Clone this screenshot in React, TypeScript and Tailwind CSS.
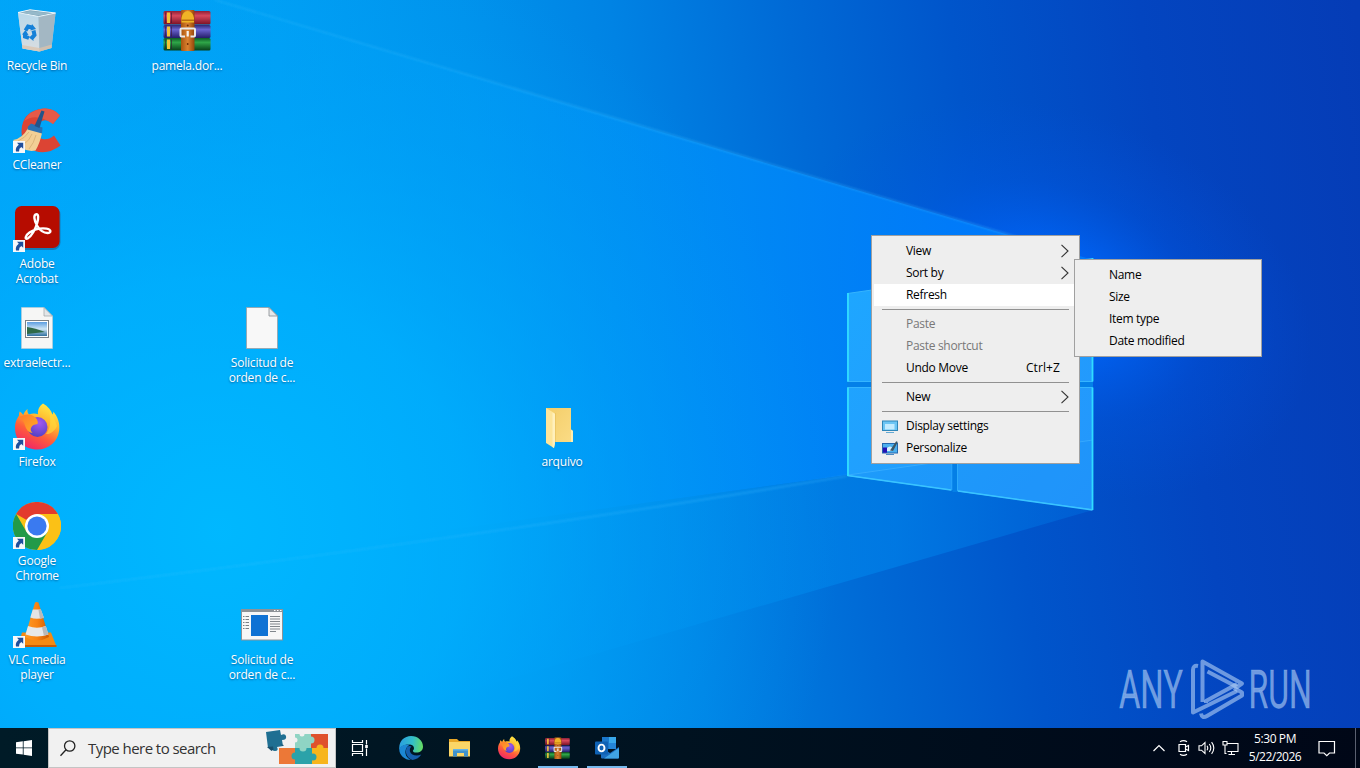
import React from 'react';
import clsx from 'clsx';

interface DesktopItem {
  id: number;
  label: string[];
  icon: React.FC;
  cell: string;
  shortcut?: boolean;
}

interface MenuEntry {
  label?: string;
  hint?: string;
  icon?: React.FC;
  arrow?: boolean;
  disabled?: boolean;
  active?: boolean;
}

/* ---------- Shared gradients ---------- */

const SharedDefs = () => (
  <svg className="absolute h-0 w-0" aria-hidden="true">
    <defs>
      <linearGradient id="ffBody" x1="0.8" y1="0" x2="0.3" y2="1">
        <stop offset="0" stopColor="#fff14a" />
        <stop offset="0.35" stopColor="#ffb92e" />
        <stop offset="0.65" stopColor="#ff5e3a" />
        <stop offset="1" stopColor="#f02468" />
      </linearGradient>
      <radialGradient id="ffGlobe" cx="0.6" cy="0.3" r="0.8">
        <stop offset="0" stopColor="#a258f0" />
        <stop offset="1" stopColor="#4a3fbf" />
      </radialGradient>
      <linearGradient id="ffHead" x1="0" y1="0" x2="1" y2="1">
        <stop offset="0" stopColor="#ff7a2c" />
        <stop offset="1" stopColor="#ffae24" />
      </linearGradient>
      <linearGradient id="rarRed" x1="0" y1="0" x2="0" y2="1">
        <stop offset="0" stopColor="#8c2036" />
        <stop offset="0.35" stopColor="#d8485c" />
        <stop offset="1" stopColor="#7a1226" />
      </linearGradient>
      <linearGradient id="rarBlue" x1="0" y1="0" x2="0" y2="1">
        <stop offset="0" stopColor="#2c2a78" />
        <stop offset="0.35" stopColor="#6a63d0" />
        <stop offset="1" stopColor="#241d68" />
      </linearGradient>
      <linearGradient id="rarGreen" x1="0" y1="0" x2="0" y2="1">
        <stop offset="0" stopColor="#0c5c26" />
        <stop offset="0.35" stopColor="#2fa648" />
        <stop offset="1" stopColor="#07401a" />
      </linearGradient>
      <linearGradient id="rarBelt" x1="0" y1="0" x2="1" y2="0">
        <stop offset="0" stopColor="#a8540f" />
        <stop offset="0.5" stopColor="#dc8230" />
        <stop offset="1" stopColor="#93450a" />
      </linearGradient>
      <linearGradient id="vlcCone" x1="0" y1="0" x2="1" y2="0">
        <stop offset="0" stopColor="#ff9a24" />
        <stop offset="0.5" stopColor="#f98312" />
        <stop offset="1" stopColor="#cf5a00" />
      </linearGradient>
      <linearGradient id="folderBack" x1="0" y1="0" x2="1" y2="1">
        <stop offset="0" stopColor="#f3cd68" />
        <stop offset="1" stopColor="#fbdc86" />
      </linearGradient>
      <linearGradient id="binLeft" x1="0" y1="0" x2="0" y2="1">
        <stop offset="0" stopColor="#b9d8ea" />
        <stop offset="1" stopColor="#d9dde0" />
      </linearGradient>
      <linearGradient id="edgeTop" x1="0" y1="0.4" x2="1" y2="0.5">
        <stop offset="0" stopColor="#2a9ee0" />
        <stop offset="0.55" stopColor="#33bfc9" />
        <stop offset="1" stopColor="#66dd62" />
      </linearGradient>
      <linearGradient id="sky" x1="0" y1="0" x2="0" y2="1">
        <stop offset="0" stopColor="#5c9de0" />
        <stop offset="0.5" stopColor="#cfe6f5" />
        <stop offset="1" stopColor="#2f6f9e" />
      </linearGradient>
    </defs>
  </svg>
);

/* ---------- Desktop icons, drawn on a 48px box ---------- */

const RecycleBinIcon = () => (
  <svg width="48" height="48" viewBox="0 0 48 48">
    <path d="M5 5.5 17 2.8 42.5 6 38.5 41 26.5 44.5 9.5 41.5Z" fill="#a9cfe4" />
    <path d="M5 5.5 25.5 9.5 26.5 44.5 9.5 41.5Z" fill="url(#binLeft)" />
    <path d="M25.5 9.5 42.5 6 38.5 41 26.5 44.5Z" fill="#a3b7c3" />
    <path d="M5 5.5 17 2.8 42.5 6 25.5 9.5Z" fill="#7fa3b6" stroke="#e9f5fb" strokeWidth="1" />
    <path d="M8 5.8 17 4 39 6.3 25.5 8.6Z" fill="#96b9ca" />
    <path d="M9 38 26.3 41 26.5 44.5 9.5 41.5ZM26.3 41 38.8 37.5 38.5 41 26.5 44.5Z" fill="#dcc3ab" opacity="0.75" />
    <g fill="none" stroke="#1581d8" strokeWidth="4">
      <path d="M12.5 23.5 15 19.5 19 20.5" />
      <path d="M20.5 23.5 21.5 28 19 31" />
      <path d="M16 31 12 29.5 12 26" />
    </g>
    <path d="M19 17 23 22 17.5 23.5ZM20 27.5 20.5 34 16 30.5ZM9 27.5 12.5 23 15.5 28Z" fill="#1581d8" />
  </svg>
);

const WinrarIcon = ({ size = 48 }: { size?: number }) => (
  <svg width={size} height={size} viewBox="0 0 48 48">
    <rect x="0.5" y="4" width="47" height="13.5" rx="1.5" fill="url(#rarRed)" />
    <rect x="0.5" y="18" width="47" height="13" rx="1.5" fill="url(#rarBlue)" />
    <rect x="0.5" y="31" width="47" height="12.5" rx="1.5" fill="url(#rarGreen)" />
    <path d="M4 5.5h3v10.5h-3zM4 19.5h3v10h-3zM4 32.5h3v9.5h-3z" fill="#f2c438" />
    <path d="M2 5.5h1v10.5h-1zM8 5.5h1v10.5h-1zM2 19.5h1v10h-1zM8 19.5h1v10h-1zM2 32.5h1v9.5h-1zM8 32.5h1v9.5h-1z" fill="#3a1030" opacity="0.6" />
    <rect x="18" y="3" width="13.5" height="41" rx="1" fill="url(#rarBelt)" />
    <path d="M18.5 11a6.3 8 0 0 1 12.5 0v4.5h-12.5z" fill="#f0b326" />
    <path d="M18.5 12.5h12.5v1.500h-12.500z" fill="#b96f10" />
    <circle cx="24.7" cy="18.5" r="1" fill="#6e2c04" />
    <path d="M22 29.500h-3.500q-1 0-1-1v-6q0-1 1-1h12.500q1 0 1 1v6q0 1-1 1H27.500" fill="none" stroke="#e9e9ea" strokeWidth="2" />
    <path d="M24.700 24v5.500" stroke="#f4f4f4" strokeWidth="2.200" />
    <circle cx="24.700" cy="37" r="0.900" fill="#6e2c04" />
  </svg>
);

const CCleanerIcon = () => (
  <svg width="48" height="48" viewBox="0 0 48 48">
    <path d="M47 9.5Q40 1.5 29 2.8 12 5 9 20 6 39 22 45q13 4 25.5-5.5L41 29.5q-6 5-11.5 3.5-7.5-2-7-9.5.8-8 8-9 6.5-.8 9.5 3.5Z" fill="#dc4434" />
    <path d="M47 9.5Q40 1.5 29 2.8 16 4.5 11 15q12-9 29 3Z" fill="#e65a48" />
    <path d="M0 34q9-1 15.5-12.5L29 27q-2 10-6.5 17.5Q10 47 0 34Z" fill="#f2cf95" />
    <path d="M5 35q7-3 11-9M10 39q7-5 9-11M16 43q5-6 7-14" stroke="#d9b176" strokeWidth="0.9" fill="none" />
    <path d="M15 20.5 18 17.5 29.5 21.5 29 27.5 14.5 23.5Z" fill="#2a72b4" />
    <path d="M21.5 20 28.5 4.5 31.5 5.5 26.5 22Z" fill="#24548a" />
  </svg>
);

const AcrobatIcon = () => (
  <svg width="48" height="48" viewBox="0 0 48 48">
    <rect x="2.5" y="2" width="45" height="43" rx="7.5" fill="#3a2c40" opacity="0.35" />
    <rect x="2" y="1" width="44.5" height="42" rx="6.5" fill="#b60c00" />
    <path
      d="M23.5 9.3c-3.4 0-2.3 6.5.5 11.2 2.5 4.2 6.5 7.5 10.5 7.5 4.2 0 3.8-3.8-1-4.4-5.5-.7-12.5.9-17 3.9-4.500 3-5 7.500-1.800 6 3.800-2 7.800-9.500 9.500-15.500 1.400-5 1.300-8.700-.700-8.700Z"
      fill="none"
      stroke="#fff"
      strokeWidth="2.4"
      strokeLinejoin="round"
    />
  </svg>
);

const PageIcon = () => (
  <svg width="48" height="48" viewBox="0 0 48 48">
    <path d="M8.5 3.5H31L39.5 12V44.5H8.5Z" fill="#f8f8f8" stroke="#9a9fa4" strokeWidth="0.8" />
    <path d="M31 3.5V12h8.5Z" fill="#e6e8ea" stroke="#858a90" strokeWidth="0.8" />
  </svg>
);

const PictureFileIcon = () => (
  <svg width="48" height="48" viewBox="0 0 48 48">
    <path d="M8.5 3.5H31L39.5 12V44.5H8.5Z" fill="#f6f6f5" stroke="#c6ccd0" strokeWidth="0.6" />
    <path d="M31 3.5V12h8.5Z" fill="#e3e6e8" stroke="#9ba0a5" strokeWidth="0.7" />
    <rect x="12.5" y="16.5" width="23" height="17" fill="#fff" stroke="#7b7f84" />
    <rect x="14" y="18" width="20" height="14" fill="url(#sky)" />
    <path d="M14 23q8 1 18 5l-18 2Z" fill="#2f6a48" />
  </svg>
);

const FirefoxIcon = ({ size = 48 }: { size?: number }) => (
  <svg width={size} height={size} viewBox="0 0 48 48">
    <path
      d="M30 0.5c5 3 8 6.5 9.5 11 .8-1 .8-2 .7-3 4.5 5 6.8 11.5 6 18.5C45 38.5 36 46.5 24.5 46.5 11.5 46.5 2 37.5 2 25c0-6 2-9.5 4-12.5 0-2 .2-3 .7-4 1.5 1 2.5 2 3.5 3.5C11.5 9 12.5 7.5 14.5 6c-.3 2 0 4 1.5 5.5 3.5-1.5 6.5-1.2 9-.3C24.5 6.5 26.5 3 30 .5Z"
      fill="url(#ffBody)"
    />
    <circle cx="24.5" cy="24" r="10" fill="url(#ffGlobe)" />
    <path d="M6 14q5-3 10-2.5 5 .5 8 5 1.500 3 .500 4.500-5 .500-6 3-2 3 1 6-6-1-7.500-7.500Q10 16 6 14Z" fill="url(#ffHead)" />
    <path d="M30 1c4 3 6.5 8 7 13 1 8-1 13-4 17 4 .5 9-3 11-8-1.5-4-3-8-5-11.5C37.5 7 35 4 30 1Z" fill="#ffda3c" opacity="0.65" />
  </svg>
);

const ChromeIcon = () => (
  <svg width="48" height="48" viewBox="0 0 48 48">
    <circle cx="24" cy="24" r="24" fill="#fbc116" />
    <path d="M24 24 3.2 12A24 24 0 0 1 44.8 12Z" fill="#e33b2e" />
    <path d="M24 12H44.8A24 24 0 0 1 24 48L34.4 30Z" fill="#fbc116" />
    <path d="M3.2 12A24 24 0 0 0 24 48L34.4 30 13.6 30Z" fill="#229a49" />
    <circle cx="24" cy="24" r="12" fill="#fff" />
    <circle cx="24" cy="24" r="9.6" fill="#3a7af0" />
  </svg>
);

const VlcIcon = () => (
  <svg width="48" height="48" viewBox="0 0 48 48">
    <path d="M9 31.5h29l5.5 14H5Z" fill="#f48a14" />
    <path d="M5 44h38.5v2H5Z" fill="#c95c04" />
    <path d="M22 1.5q1.5-1 3.5 0L36 36q-12 7-24 0Z" fill="url(#vlcCone)" />
    <path d="M19.8 8.5h8l3 8q-7 2.5-13.500 0Z" fill="#e4e4e4" />
    <path d="M15 25q9 3.5 17.8 0l2.6 8.5q-11.500 4-22.900 0Z" fill="#e8e8e8" />
    <path d="M25.5 9h2.500l3 8-4 .8ZM29 26.200l3.800-1.200 2.600 8.500-4.500 1.200Z" fill="#b9b9b9" />
  </svg>
);

const FolderIcon = () => (
  <svg width="48" height="48" viewBox="0 0 48 48">
    <path d="M8 5H33V26.5L35 28V39H8Z" fill="url(#folderBack)" />
    <path d="M33 26.5 35 28V39H33Z" fill="#ffeeb0" />
    <path d="M17 10V39" stroke="#dfb54e" strokeWidth="0.8" />
    <path d="M8 5 17 10.5V40L16 45 8 40Z" fill="#fde59a" />
    <path d="M14.5 9.5 17 11V40L16 45 14.5 44Z" fill="#fff0bc" />
  </svg>
);

const ExecutableIcon = () => (
  <svg width="48" height="48" viewBox="0 0 48 48">
    <rect x="3.5" y="8.5" width="41" height="30.5" fill="#f7f7f7" stroke="#8d9297" />
    <rect x="3" y="8" width="42" height="3" fill="#8d9297" />
    <path d="M36 9.5h1.5M39 9.5h1.5M42 9.5h1.5" stroke="#fff" />
    <rect x="13" y="14" width="17" height="21" fill="#0f72d4" />
    <path d="M5 15.5h6M5 18.5h6M5 21.5h6M5 24.5h6M5 27.5h6" stroke="#7a8086" strokeDasharray="1.5 1 4 0" />
    <path d="M32 15.5h10M32 18h10M32 20.5h10M32 23h10M32 25.5h10M32 28h10M32 30.5h6" stroke="#73797f" strokeWidth="0.9" />
  </svg>
);

const ShortcutArrow = () => (
  <svg className="absolute left-0 top-[35px]" width="12" height="12" viewBox="0 0 12 12">
    <rect width="12" height="12" fill="#f6f8fa" />
    <path d="M4 1.8H10.2v6L8.3 6.1Q5.8 7.5 6 10.5H3Q2 6.5 5.8 3.7Z" fill="#1f4f9c" />
  </svg>
);

/* ---------- Context menu icons ---------- */

const DisplayIcon = () => (
  <svg width="16" height="16" viewBox="0 0 16 16">
    <rect x="0.5" y="3" width="15" height="9.5" fill="#6cc6f5" stroke="#2f86b8" />
    <path d="M3 11.5V6h9.5v5.5Z" fill="#c3ecff" />
    <path d="M4 14.5h8" stroke="#64a9d4" />
  </svg>
);

const PersonalizeIcon = () => (
  <svg width="16" height="16" viewBox="0 0 16 16">
    <rect x="0.5" y="3.5" width="15" height="9.5" fill="#4bb0ee" stroke="#2467ae" />
    <path d="M1 7.5h4v5.2H1Z" fill="#2410b4" />
    <path d="M5 8q3-3 6 0v3H5Z" fill="#d8f0fb" />
    <path d="M8 10.5 14.2 1.2 15.8 2 11 11Z" fill="#3d5866" />
    <path d="M4 14.5h8" stroke="#4a8ac4" />
  </svg>
);

const Chevron = () => (
  <svg width="9" height="14" viewBox="0 0 9 14">
    <path d="M1.500 0.800 8 7 1.500 13.200" fill="none" stroke="#333" strokeWidth="1.1" />
  </svg>
);

/* ---------- Data ---------- */

const desktopItems: DesktopItem[] = [
  { id: 1, label: ['Recycle Bin'], icon: RecycleBinIcon, cell: 'col-start-1 row-start-1' },
  { id: 2, label: ['pamela.dor...'], icon: WinrarIcon, cell: 'col-start-3 row-start-1' },
  { id: 3, label: ['CCleaner'], icon: CCleanerIcon, cell: 'col-start-1 row-start-2', shortcut: true },
  { id: 4, label: ['Adobe', 'Acrobat'], icon: AcrobatIcon, cell: 'col-start-1 row-start-3', shortcut: true },
  { id: 5, label: ['extraelectr...'], icon: PictureFileIcon, cell: 'col-start-1 row-start-4' },
  { id: 6, label: ['Solicitud de', 'orden de c...'], icon: PageIcon, cell: 'col-start-4 row-start-4' },
  { id: 7, label: ['Firefox'], icon: FirefoxIcon, cell: 'col-start-1 row-start-5', shortcut: true },
  { id: 8, label: ['arquivo'], icon: FolderIcon, cell: 'col-start-8 row-start-5' },
  { id: 9, label: ['Google', 'Chrome'], icon: ChromeIcon, cell: 'col-start-1 row-start-6', shortcut: true },
  { id: 10, label: ['VLC media', 'player'], icon: VlcIcon, cell: 'col-start-1 row-start-7', shortcut: true },
  { id: 11, label: ['Solicitud de', 'orden de c...'], icon: ExecutableIcon, cell: 'col-start-4 row-start-7' },
];

// An empty entry is a separator
const contextMenu: MenuEntry[] = [
  { label: 'View', arrow: true },
  { label: 'Sort by', arrow: true },
  { label: 'Refresh', active: true },
  {},
  { label: 'Paste', disabled: true },
  { label: 'Paste shortcut', disabled: true },
  { label: 'Undo Move', hint: 'Ctrl+Z' },
  {},
  { label: 'New', arrow: true },
  {},
  { label: 'Display settings', icon: DisplayIcon },
  { label: 'Personalize', icon: PersonalizeIcon },
];

const sortMenu: MenuEntry[] = [
  { label: 'Name' },
  { label: 'Size' },
  { label: 'Item type' },
  { label: 'Date modified' },
];

/* ---------- Wallpaper ---------- */

const Wallpaper = () => (
  <svg className="absolute inset-0" width="1360" height="768" viewBox="0 0 1360 768">
    <defs>
      <linearGradient id="wpBase" x1="0" y1="0" x2="1330" y2="-180" gradientUnits="userSpaceOnUse">
        <stop offset="0" stopColor="#00a6f8" />
        <stop offset="0.2" stopColor="#00a0f4" />
        <stop offset="0.34" stopColor="#0093ec" />
        <stop offset="0.45" stopColor="#0083e4" />
        <stop offset="0.58" stopColor="#006ad6" />
        <stop offset="0.7" stopColor="#0055cb" />
        <stop offset="0.84" stopColor="#0345c0" />
        <stop offset="1" stopColor="#053cb6" />
      </linearGradient>
      <radialGradient id="wpCyan" cx="0" cy="0" r="1" gradientUnits="userSpaceOnUse" gradientTransform="translate(220 530) scale(620 620)">
        <stop offset="0" stopColor="#00b9ff" stopOpacity="0.95" />
        <stop offset="0.4" stopColor="#00b2ff" stopOpacity="0.7" />
        <stop offset="0.7" stopColor="#00a4fa" stopOpacity="0.35" />
        <stop offset="1" stopColor="#0098f4" stopOpacity="0" />
      </radialGradient>
      <radialGradient id="wpGlow" cx="0" cy="0" r="1" gradientUnits="userSpaceOnUse" gradientTransform="translate(1050 300) rotate(20) scale(270 190)">
        <stop offset="0" stopColor="#006eff" stopOpacity="1" />
        <stop offset="0.3" stopColor="#0066fc" stopOpacity="0.7" />
        <stop offset="0.6" stopColor="#005aec" stopOpacity="0.3" />
        <stop offset="1" stopColor="#0054e0" stopOpacity="0" />
      </radialGradient>
      <linearGradient id="wpBeam" x1="250" y1="0" x2="1000" y2="0" gradientUnits="userSpaceOnUse">
        <stop offset="0" stopColor="#00a8fb" stopOpacity="0.1" />
        <stop offset="0.3" stopColor="#009df8" stopOpacity="0.5" />
        <stop offset="0.65" stopColor="#008dfb" stopOpacity="0.8" />
        <stop offset="1" stopColor="#007eff" stopOpacity="0.85" />
      </linearGradient>
      <linearGradient id="wpLow" x1="300" y1="0" x2="1093" y2="0" gradientUnits="userSpaceOnUse">
        <stop offset="0" stopColor="#00a4fa" stopOpacity="0" />
        <stop offset="0.5" stopColor="#0092f0" stopOpacity="0.4" />
        <stop offset="0.75" stopColor="#0082ea" stopOpacity="0.65" />
        <stop offset="1" stopColor="#0064d8" stopOpacity="0.65" />
      </linearGradient>
      <linearGradient id="wpRay" x1="200" y1="0" x2="1020" y2="0" gradientUnits="userSpaceOnUse">
        <stop offset="0" stopColor="#40c4ff" stopOpacity="0.25" />
        <stop offset="1" stopColor="#35b4ff" stopOpacity="0.45" />
      </linearGradient>
      <linearGradient id="wpPane" x1="847" y1="300" x2="1093" y2="500" gradientUnits="userSpaceOnUse">
        <stop offset="0" stopColor="#1ea6ff" />
        <stop offset="1" stopColor="#2496fc" />
      </linearGradient>
      <filter id="wpSoft" x="-10%" y="-10%" width="120%" height="120%">
        <feGaussianBlur stdDeviation="0.9" />
      </filter>
    </defs>
    <rect width="1360" height="768" fill="url(#wpBase)" />
    <rect width="1360" height="768" fill="url(#wpGlow)" />
    <path d="M215 0 1093 260V440L847 475 0 592V0Z" fill="url(#wpBeam)" />
    <path d="M847 475 1093 510 200 768H0V592Z" fill="url(#wpLow)" />
    <rect width="1360" height="768" fill="url(#wpCyan)" />
    <g fill="none" filter="url(#wpSoft)">
      <path d="M215 0 1040 244" stroke="url(#wpRay)" strokeWidth="1.8" />
      <path d="M60 588 Q500 535 847 476" stroke="url(#wpRay)" strokeWidth="1.6" />
    </g>
    <path d="M847 293 1093 258V510L847 475Z" fill="#0480e8" />
    <g fill="url(#wpPane)" stroke="#35b4ff" strokeWidth="1">
      <path d="M847.5 293.5 952 278.5V381.5H847.5Z" />
      <path d="M957.5 277.5 1092.5 258.5V381.5H957.5Z" />
      <path d="M847.5 387.5H952V490L847.5 475.5Z" />
      <path d="M957.5 387.5H1092.5V509.5L957.5 491Z" />
    </g>
    <path d="M848 475 1093 440V509L957 491 952 490Z" fill="#128cf4" opacity="0.25" />
    <path d="M848 475 1093 440" stroke="#45b4ff" strokeOpacity="0.6" />
    <path d="M847.5 475.5 951 490M958 491 1092.5 510" fill="none" stroke="#3ac4ff" strokeWidth="1.4" />
    <path d="M848 293V381.5M848 387.5V476M1092.5 510V387.5M1092.5 381.5V258" fill="none" stroke="#30dcff" strokeWidth="1.8" />
    <path d="M954.7 386V492" stroke="#047fe6" strokeWidth="4.5" />
  </svg>
);

const Watermark = () => (
  <svg className="absolute left-[1110px] top-[650px]" width="220" height="80" viewBox="0 0 220 80">
    <g fill="#a9c8f2" fillOpacity="0.66" stroke="#a9c8f2" strokeOpacity="0.3" strokeWidth="0.8" fontFamily="Roboto, sans-serif" fontSize="52">
      <text x="0" y="0" transform="translate(9 58) scale(0.63 1.02)">ANY</text>
      <text x="0" y="0" transform="translate(138.500 58) scale(0.615 1.02)">RUN</text>
    </g>
    <g fill="none" stroke="#a9c8f2" strokeOpacity="0.64" strokeWidth="4" strokeLinejoin="round">
      <path d="M88 16Q83 15 83 20V62.5L127 41" />
      <path d="M92.5 52V11.5L132 33.5 127 37 97.5 21.5" />
      <path d="M96 53V51L127 34M91 63.5Q92 69 97 66L132 45.5V42.5L124 38" />
    </g>
  </svg>
);

/* ---------- Menus ---------- */

const Menu = ({ entries, className }: { entries: MenuEntry[]; className: string }) => (
  <div className={clsx('absolute flex flex-col border border-[#a0a0a0] bg-[#eeeeee] px-[2px] py-1', className)}>
    {entries.map((entry, i) =>
      entry.label ? (
        <div
          key={i}
          className={clsx(
            'flex h-[22px] items-center whitespace-nowrap pl-2 pr-[8px] text-[12px] tracking-[-0.3px]',
            entry.active && 'bg-white',
            entry.disabled ? 'text-[#787878]' : 'text-black'
          )}
        >
          <span className="flex w-6 shrink-0 items-center">{entry.icon && <entry.icon />}</span>
          <span className="grow">{entry.label}</span>
          {entry.hint && <span className="pr-[9px] tracking-[0.1px]">{entry.hint}</span>}
          {entry.arrow && <Chevron />}
        </div>
      ) : (
        <div key={i} className="flex h-[7px] items-center px-2">
          <div className="h-px w-full bg-[#919191]" />
        </div>
      )
    )}
  </div>
);

/* ---------- Taskbar ---------- */

const PuzzleArt = () => (
  <svg width="64" height="38" viewBox="0 0 64 38">
    <path d="M29 5h16v14H29Z" fill="#8fd4c4" />
    <path d="M45 5h17v14H45Z" fill="#df512c" />
    <path d="M13 19h16v16H13Z" fill="#ec7837" />
    <path d="M29 19h17v16H29Z" fill="#2ba2a9" />
    <path d="M46 19h16v16H46Z" fill="#f7b51c" />
    <circle cx="45" cy="11" r="3.5" fill="#8fd4c4" />
    <circle cx="37" cy="19" r="3.5" fill="#8fd4c4" />
    <circle cx="29" cy="27" r="3.5" fill="#2ba2a9" />
    <circle cx="54" cy="19" r="3.5" fill="#f7b51c" />
    <circle cx="47" cy="28" r="3.5" fill="#2ba2a9" />
    <circle cx="29" cy="11" r="2.5" fill="#f0f0f0" />
    <circle cx="36" cy="5" r="2.5" fill="#f0f0f0" />
    <path d="M0 3 14 1l1 5q4-2 5 1 1 4-4 4l1 6-6 1q2 4-2 4t-2-4l-5 1Z" fill="#1f6f92" />
    <path d="M1 18 7 17.5l.5 3-2 1.5ZM14 15.5l4 .5-1 1Z" fill="#184f6c" />
  </svg>
);

const TaskViewIcon = () => (
  <svg width="18" height="18" viewBox="0 0 18 18" fill="none" stroke="#fff" strokeWidth="1.2">
    <path d="M1.5 1v2.5h10V1M1.5 17v-2.5h10V17M1.5 5.5h10v7h-10ZM15.5 1v4.5M15.5 9.5V17" />
    <path d="M14.2 6h2.6v3h-2.6Z" fill="#fff" stroke="none" />
  </svg>
);

const EdgeIcon = () => (
  <svg width="24" height="24" viewBox="0 0 24 24">
    <path d="M12 0C19 0 24 5 24 10.5c0 4-3 6-6.5 6-2.5 0-4-1-3.5-2 2-2 1-5.5-3-6C5 8 1 11 .5 14 -1 6.5 4.5 0 12 0Z" fill="url(#edgeTop)" />
    <path d="M11 8.5C5 8 1 10 .3 13 0 19 5.5 24 12 24c-4-2-6-5-5.5-9 .3-3 2-5 4.5-6.5Z" fill="#1c88d4" />
    <path d="M8.5 10.5C5 15 7.5 22 13.5 24c4-.5 7-2.5 8.800-5.500-4.300 2-10.300 1-11.300-3-.500-2 0-4 1.500-5Q10.500 9.500 8.500 10.500Z" fill="#155fae" />
  </svg>
);

const ExplorerIcon = () => (
  <svg width="24" height="24" viewBox="0 0 24 24">
    <path d="M1 3h8l2 2h11v4H1Z" fill="#e8a727" />
    <path d="M1 6h21v14.5H1Z" fill="#fbd667" />
    <path d="M5 13h15v7.500h-4V17h-7v3.500H5Z" fill="#3f92cc" />
    <path d="M5 13h15v1.500H5Z" fill="#64b4e6" />
  </svg>
);

const OutlookIcon = () => (
  <svg width="24" height="24" viewBox="0 0 24 24">
    <path d="M7 1h14v12H7Z" fill="#1a78cc" />
    <path d="M14 1h7v6h-7Z" fill="#38a8ea" />
    <path d="M14 7h7v6h-7Z" fill="#2486d8" />
    <path d="M6 11l9 6 9-6v10.5q0 1-1 1H7q-1 0-1-1Z" fill="#1c6fc0" />
    <path d="M24 11.5v10q0 1-1 1H9L24 12Z" fill="#40a4e4" />
    <rect x="0" y="5.5" width="13" height="13" rx="1" fill="#0f62b4" />
    <ellipse cx="6.5" cy="12" rx="3" ry="3.4" fill="none" stroke="#fff" strokeWidth="1.9" />
  </svg>
);

const taskApps = [
  { id: 'edge', icon: <EdgeIcon />, running: false },
  { id: 'explorer', icon: <ExplorerIcon />, running: false },
  { id: 'firefox', icon: <FirefoxIcon size={24} />, running: false },
  { id: 'winrar', icon: <WinrarIcon size={25} />, running: true },
  { id: 'outlook', icon: <OutlookIcon />, running: true },
];

const Taskbar = () => (
  <div className="relative flex h-10 bg-linear-to-r from-[#001b27] via-[#001220] to-[#000717]">
    <button className="flex w-12 items-center justify-center" aria-label="Start">
      <svg width="16" height="16" viewBox="0 0 16 16" fill="#fff">
        <path d="M0 2.2 6.8 1.3V7.5H0ZM7.6 1.2 16 0V7.5H7.6ZM0 8.3H6.8V14.6L0 13.7ZM7.6 8.3H16V16L7.6 14.8Z" />
      </svg>
    </button>
    <div className="flex w-72 items-center border border-[#c4c4c4] bg-[#f1f1f1] pl-[11px] pr-[5px]">
      <svg width="16" height="17" viewBox="0 0 16 17" fill="none" stroke="#222" strokeWidth="1.3">
        <circle cx="9.7" cy="6" r="5.2" />
        <path d="M6 9.8 0.5 15.8" />
      </svg>
      <span className="grow whitespace-nowrap pl-3 text-[15px] tracking-[-0.55px] text-[#333]">Type here to search</span>
      <PuzzleArt />
    </div>
    <button className="flex w-12 items-center justify-center" aria-label="Task view">
      <TaskViewIcon />
    </button>
    <div className="ml-[2px] flex">
      {taskApps.map(app => (
        <div key={app.id} className="relative flex w-[49px] items-center justify-center">
          {app.icon}
          {app.running && <span className="absolute bottom-0 left-[5px] h-[2px] w-10 bg-[#76b9ed]" />}
        </div>
      ))}
    </div>
    <div className="ml-auto flex items-center text-white">
      <div className="flex items-center gap-[7px]">
        <svg width="14" height="16" viewBox="0 0 14 16" fill="none" stroke="#fff" strokeWidth="1.2">
          <path d="M1.5 11 7 5.5 12.5 11" />
        </svg>
        <svg className="ml-[3px]" width="16" height="18" viewBox="0 0 16 18" fill="none" stroke="#fff" strokeWidth="1.2">
          <path d="M3 5.5h6.5v7H3ZM9.5 8l3-1.5v5l-3-1.5M4 2.8q3.500-2.200 7 0M4 15.200q3.500 2.200 7 0" />
        </svg>
        <svg className="-ml-[1px]" width="18" height="16" viewBox="0 0 18 16" fill="none" stroke="#fff" strokeWidth="1.1">
          <path d="M1 5.8h2.5L7 2.5v11L3.5 10.2H1ZM9 5.8q1.5 2.2 0 4.4M11.3 4q3 4 0 8M13.6 2.2q4.400 5.800 0 11.600" />
        </svg>
        <svg className="-ml-[1px]" width="17" height="16" viewBox="0 0 17 16" fill="none" stroke="#fff" strokeWidth="1.1">
          <path d="M5.5 3.5h10.5v8H5.5M9.5 11.5v2.5M6.5 14.5h6.5M1 1.5h4v3.5H1ZM3 5v8.5h1.5" />
        </svg>
      </div>
      <div className="ml-[6px] flex w-[60px] flex-col items-center whitespace-nowrap text-[12px] leading-[18px] tracking-[-0.4px]">
        <span>5:30 PM</span>
        <span className="tracking-[-0.5px]">5/22/2026</span>
      </div>
      <svg className="ml-[13px] mr-[19px]" width="18" height="17" viewBox="0 0 18 17" fill="none" stroke="#fff" strokeWidth="1.2">
        <path d="M1 1.5h15.5v11.5H11.5L8.8 15.7 6 13H1Z" />
      </svg>
      <div className="h-10 w-[5px] border-l border-[#5a6070]" />
    </div>
  </div>
);

const App: React.FC = () => {
  return (
    <div className="relative flex h-[768px] w-[1360px] flex-col overflow-hidden bg-[#0078d7] font-['Open_Sans','Noto_Sans',sans-serif] select-none">
      <SharedDefs />
      <Wallpaper />
      <Watermark />

      {/* Desktop icon grid */}
      <div className="relative grid h-[728px] grid-cols-[repeat(18,75px)] grid-rows-[repeat(7,99px)]">
        {desktopItems.map(item => (
          <div key={item.id} className={clsx('flex flex-col items-center pt-[7px] pr-[1px]', item.cell)}>
            <div className="relative h-12 w-12">
              <item.icon />
              {item.shortcut && <ShortcutArrow />}
            </div>
            <div className="mt-[3px] text-center text-[12px] leading-[15px] tracking-[-0.2px] whitespace-nowrap text-white [text-shadow:0_1px_2px_rgba(0,40,90,0.55)]">
              {item.label.map(line => (
                <div key={line}>{line}</div>
              ))}
            </div>
          </div>
        ))}
      </div>

      <Taskbar />

      <Menu entries={contextMenu} className="left-[871px] top-[235px] w-[209px]" />
      <Menu entries={sortMenu} className="left-[1074px] top-[259px] w-[188px]" />
    </div>
  );
};

export default App;
